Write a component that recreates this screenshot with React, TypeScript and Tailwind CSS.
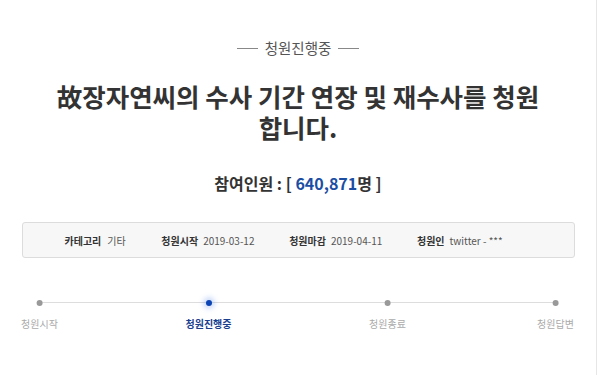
import React from "react";

const font = { fontFamily: '"Noto Sans CJK KR", "Noto Sans", sans-serif' };

export default function App() {
  const steps = [
    { label: "청원시작", active: false },
    { label: "청원진행중", active: true },
    { label: "청원종료", active: false },
    { label: "청원답변", active: false },
  ];
  return (
    <div className="w-[600px] h-[375px] bg-white overflow-hidden" style={font}>
      <div className="w-[597px] h-[375px] border-r border-[#e6e6e6] flex flex-col items-center">
        <div className="mt-[38px] flex items-center gap-[7px] text-[14.5px] text-[#555] leading-[20px]">
          <span className="w-[21px] h-px bg-[#888]" />
          <span>청원진행중</span>
          <span className="w-[21px] h-px bg-[#888]" />
        </div>
        <h1 className="mt-[22px] text-[25.5px] font-bold text-[#333] leading-[31px] text-center w-[500px]">
          故장자연씨의 수사 기간 연장 및 재수사를 청원 합니다.
        </h1>
        <div className="mt-[30px] text-[16px] font-bold text-[#333] leading-[22px]">
          참여인원 : [ <span className="text-[#1b4ea3]">640,871</span>명 ]
        </div>
        <div className="mt-[28px] w-[553px] h-[36px] rounded-[3px] border border-[#dcdcdc] bg-[#f7f7f7] flex items-center pl-[42px] text-[10px] text-[#555]">
          <span className="font-bold text-[#333]">카테고리</span>
          <span className="ml-[6px] w-[54px]">기타</span>
          <span className="font-bold text-[#333]">청원시작</span>
          <span className="ml-[5px] w-[86px]">2019-03-12</span>
          <span className="font-bold text-[#333]">청원마감</span>
          <span className="ml-[5px] w-[86px]">2019-04-11</span>
          <span className="font-bold text-[#333]">청원인</span>
          <span className="ml-[5px]">twitter - ***</span>
        </div>
        <div className="mt-[39px] w-[597px] relative h-[40px]">
          <div className="absolute left-[39px] right-[41px] top-[5px] h-px bg-[#dddddd]" />
          {steps.map((s, i) => {
            const x = [40, 209, 388, 556][i];
            return (
              <div
                key={s.label}
                className="absolute top-0 flex flex-col items-center -translate-x-1/2"
                style={{ left: x }}
              >
                <div className="h-[11px] flex items-center justify-center">
                  {s.active ? (
                    <span className="w-[6px] h-[6px] rounded-full bg-[#0b44b4] shadow-[0_0_5px_3px_rgba(60,120,230,0.25)]" />
                  ) : (
                    <span className="w-[6px] h-[6px] rounded-full bg-[#999]" />
                  )}
                </div>
                <span
                  className={
                    "mt-[9px] text-[10px] whitespace-nowrap leading-[14px] " +
                    (s.active ? "font-bold text-[#1b3f8f]" : "text-[#aaa]")
                  }
                >
                  {s.label}
                </span>
              </div>
            );
          })}
        </div>
      </div>
    </div>
  );
}
